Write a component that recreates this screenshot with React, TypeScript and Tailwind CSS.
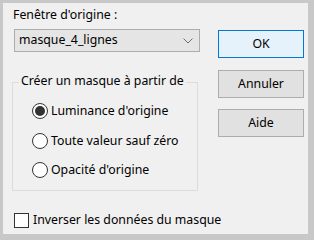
import React from "react";

export default function App() {
  const font = { fontFamily: '"Noto Sans", "Open Sans", sans-serif' };
  return (
    <div className="w-[314px] h-[240px] bg-[#c8c8c8] pl-[3px] pt-[3px] pr-[6px] pb-[6px]" style={font}>
      <div className="w-full h-full bg-[#f0f0f0] text-[12.3px] text-black leading-none relative flex whitespace-nowrap">
        <div className="flex flex-col w-[200px] shrink-0">
          <div className="pl-[10px] pt-[6px] h-[26px]">Fenêtre d'origine :</div>
          <div className="ml-[11px] w-[186px] h-[23px] border border-[#adadad] bg-[#e5e5e5] flex items-center justify-between pl-[4px] pr-[6px]">
            <span>masque_4_lignes</span>
            <svg width="10" height="6" viewBox="0 0 10 6" fill="none" stroke="#707070" strokeWidth="1">
              <path d="M0.5 0.5 L5 5 L9.5 0.5" />
            </svg>
          </div>
          <div className="relative ml-[9px] mt-[30px] w-[186px] h-[109px] border border-[#dcdcdc]">
            <div className="absolute -top-[8px] left-[6px] bg-[#f0f0f0] px-[2px]">Créer un masque à partir de</div>
            <div className="flex flex-col pt-[20px] pl-[19px]">
              <div className="flex items-center h-[16px]">
                <div className="w-[16px] h-[16px] shrink-0 rounded-full border border-[#333333] bg-white flex items-center justify-center">
                  <div className="w-[10px] h-[10px] rounded-full bg-[#333333]" />
                </div>
                <span className="ml-[3px]">Luminance d'origine</span>
              </div>
              <div className="flex items-center h-[16px] mt-[14px]">
                <div className="w-[16px] h-[16px] shrink-0 rounded-full border border-[#333333] bg-white" />
                <span className="ml-[3px]">Toute valeur sauf zéro</span>
              </div>
              <div className="flex items-center h-[16px] mt-[13px]">
                <div className="w-[16px] h-[16px] shrink-0 rounded-full border border-[#333333] bg-white" />
                <span className="ml-[3px]">Opacité d'origine</span>
              </div>
            </div>
          </div>
          <div className="flex items-center ml-[11px] mt-[22px]">
            <div className="w-[15px] h-[15px] shrink-0 border border-[#333333] bg-white" />
            <span className="ml-[4px]">Inverser les données du masque</span>
          </div>
        </div>
        <div className="flex flex-col ml-[15px] pt-[27px]">
          <div className="w-[86px] h-[28px] border border-[#0078d7] bg-[#e5f1fb] flex items-center justify-center">OK</div>
          <div className="w-[86px] h-[28px] mt-[12px] border border-[#adadad] bg-[#e1e1e1] flex items-center justify-center">Annuler</div>
          <div className="w-[86px] h-[28px] mt-[11px] border border-[#adadad] bg-[#e1e1e1] flex items-center justify-center">Aide</div>
        </div>
      </div>
    </div>
  );
}
